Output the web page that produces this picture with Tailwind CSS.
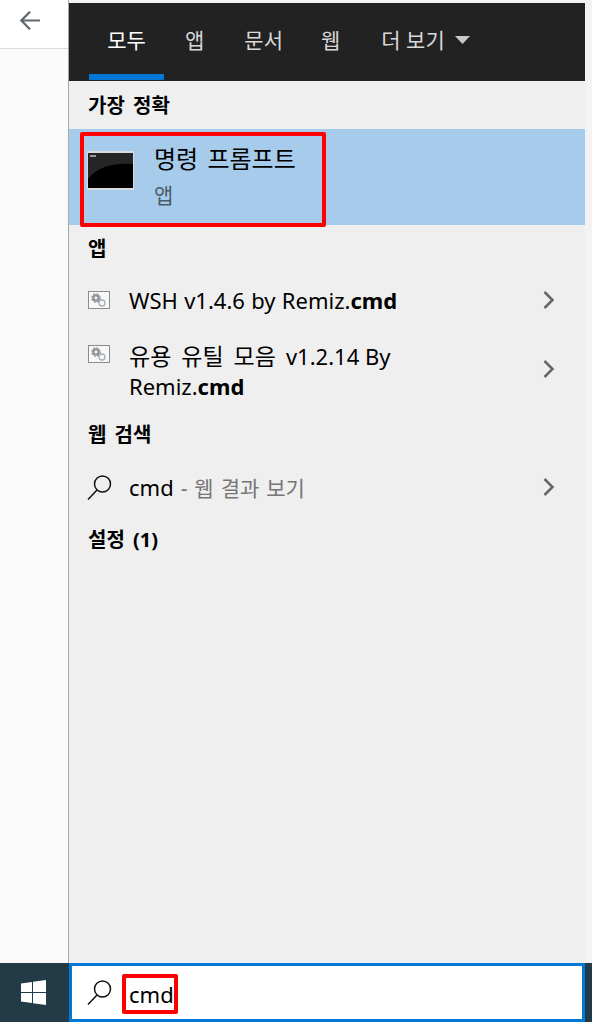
<!DOCTYPE html>
<html lang="ko"><head><meta charset="utf-8">
<script src="https://cdn.jsdelivr.net/npm/@tailwindcss/browser@4"></script></head>
<body class="m-0 overflow-hidden bg-white">
<div class="w-[592px] h-[1022px] flex flex-col font-['Noto_Sans','Noto_Sans_CJK_KR',sans-serif] text-black">
  <div class="h-[963px] flex">
    <div class="w-[68px] bg-[#fafafa] flex flex-col shrink-0">
      <div class="h-[49px] bg-white border-b border-[#d9d9de] flex items-start pl-[20px] pt-[11px]">
        <svg class="w-[20px] h-[19px]" viewBox="0 0 20 19" fill="none" stroke="#63676e" stroke-width="2.200"><path d="M20 9.500H2M10 .7 1.400 9.500 10 18.300"/></svg>
      </div>
    </div>
    <div class="w-[517px] shrink-0 bg-[#efefef] border-l border-[#a8a8a8] flex flex-col relative">
      <div class="h-[3px] bg-[#f3f3f3] shrink-0"></div>
      <div class="h-[78px] bg-[#222222] flex items-start pl-[20px] shrink-0 text-[21px] text-[#d8d8d8] leading-[28px]">
        <div class="relative w-[75px] h-[77px] pt-[23px] text-center text-white">모두<div class="absolute left-0 right-0 bottom-0 h-[6px] bg-[#0078d7]"></div></div>
        <div class="ml-[21px] pt-[23px]">앱</div>
        <div class="ml-[40px] pt-[23px]">문서</div>
        <div class="ml-[38px] pt-[23px]">웹</div>
        <div class="ml-[41px] pt-[23px] flex items-center gap-[10px]">더 보기<svg class="w-[15px] h-[8px]" viewBox="0 0 15 8"><path d="M0 0H15L7.500 8Z" fill="#c8c8c8"/></svg></div>
      </div>
      <div class="h-[48px] pl-[19px] pt-[11px] font-bold text-[20px] leading-[28px] [word-spacing:3px] shrink-0">가장 정확</div>
      <div class="h-[96px] bg-[#a7cbea] flex items-start pl-[18px] shrink-0">
        <svg class="w-[47px] h-[39px] mt-[22px] shrink-0" viewBox="0 0 47 39"><rect width="47" height="39" fill="#d6dce2"/><rect x="1" y="2" width="45" height="35" fill="#000"/><path d="M1 2H46V13C28 12 11 15 1 28Z" fill="#262626"/><rect x="3" y="4" width="6" height="2" fill="#999"/></svg>
        <div class="ml-[20px]">
          <div class="text-[24px] leading-[30px] mt-[15px] [word-spacing:3px]">명령 프롬프트</div>
          <div class="text-[21px] leading-[28px] mt-[7px] text-[#4a5b6b]">앱</div>
        </div>
      </div>
      <div class="h-[46px] pl-[19px] pt-[10px] font-bold text-[20px] leading-[28px] shrink-0">앱</div>
      <div class="h-[58px] flex items-center pl-[19px] pr-[30px] text-[22px] leading-[30px] shrink-0">
        <svg class="w-[22px] h-[18px] shrink-0" viewBox="0 0 22 18"><rect x=".5" y=".5" width="21" height="17" fill="#f8f8f8" stroke="#8c8c8c"/><circle cx="8" cy="7" r="2.600" fill="none" stroke="#8f969c" stroke-width="2.400"/><circle cx="8" cy="7" r="4.200" fill="none" stroke="#8f969c" stroke-width="1.200" stroke-dasharray="2 1.300"/><circle cx="14" cy="12" r="3" fill="none" stroke="#a8afb5" stroke-width="1.300"/></svg>
        <div class="ml-[19px] flex-1 [word-spacing:.6px]">WSH v1.4.6 by Remiz.<b>cmd</b></div>
        <svg class="w-[12px] h-[18px] shrink-0" viewBox="0 0 12 18" fill="none" stroke="#666" stroke-width="2.500"><path d="M1.500 1 9.500 9 1.500 17"/></svg>
      </div>
      <div class="h-[80px] flex items-center pl-[19px] pr-[30px] text-[22px] leading-[30px] shrink-0">
        <svg class="w-[22px] h-[18px] shrink-0 self-start mt-[16px]" viewBox="0 0 22 18"><rect x=".5" y=".5" width="21" height="17" fill="#f8f8f8" stroke="#8c8c8c"/><circle cx="8" cy="7" r="2.600" fill="none" stroke="#8f969c" stroke-width="2.400"/><circle cx="8" cy="7" r="4.200" fill="none" stroke="#8f969c" stroke-width="1.200" stroke-dasharray="2 1.300"/><circle cx="14" cy="12" r="3" fill="none" stroke="#a8afb5" stroke-width="1.300"/></svg>
        <div class="ml-[19px] flex-1 mt-[3px]"><span class="text-[23px] [word-spacing:4px]">유용 유틸 모음 </span>v1.2.14 By<br>Remiz.<b>cmd</b></div>
        <svg class="w-[12px] h-[18px] shrink-0" viewBox="0 0 12 18" fill="none" stroke="#666" stroke-width="2.500"><path d="M1.500 1 9.500 9 1.500 17"/></svg>
      </div>
      <div class="h-[49px] pl-[19px] pt-[12px] font-bold text-[20px] leading-[28px] [word-spacing:3px] shrink-0">웹 검색</div>
      <div class="h-[58px] flex items-center pl-[18px] pr-[30px] text-[22px] leading-[30px] shrink-0">
        <svg class="w-[25px] h-[25px] shrink-0" viewBox="0 0 25 25" fill="none" stroke="#111" stroke-width="1.500"><circle cx="15.500" cy="9" r="8"/><path d="M10 15 1 24.500"/></svg>
        <div class="ml-[17px] flex-1">cmd<span class="text-[#767676] text-[21px] [word-spacing:1.500px]"> - 웹 결과 보기</span></div>
        <svg class="w-[12px] h-[18px] shrink-0" viewBox="0 0 12 18" fill="none" stroke="#666" stroke-width="2.500"><path d="M1.500 1 9.500 9 1.500 17"/></svg>
      </div>
      <div class="pl-[19px] pt-[10px] font-bold text-[20px] leading-[28px] [word-spacing:3px]">설정 (1)</div>
      <div class="absolute left-[11px] top-[132px] w-[246px] h-[95px] border-[4px] border-[#ff0000] rounded-[2px]"></div>
    </div>
    <div class="flex-1 bg-[#f3f3f3]"></div>
  </div>
  <div class="h-[59px] bg-[#233a47] flex">
    <div class="w-[69px] flex items-center justify-center shrink-0">
      <svg class="w-[25px] h-[25px] mr-[3px]" viewBox="0 0 25 25" fill="#fff"><path d="M0 3.500 11 2v10H0ZM12 1.800 25 0v12H12ZM0 13h11v10L0 21.500ZM12 13h13v12L12 23.200Z"/></svg>
    </div>
    <div class="w-[516px] bg-white border-[3px] border-[#0078d7] flex items-center relative pl-[15px] shrink-0">
      <svg class="w-[25px] h-[25px] shrink-0" viewBox="0 0 25 25" fill="none" stroke="#111" stroke-width="1.500"><circle cx="15.500" cy="9" r="8"/><path d="M10 15 1 24.500"/></svg>
      <div class="ml-[17px] text-[22px] leading-[26px] mt-[2px] border-r border-[#333]">cmd</div>
      <div class="absolute left-[50px] top-[8px] w-[56px] h-[40px] border-[4px] border-[#ff0000] rounded-[2px]"></div>
    </div>
  </div>
</div>
</body></html>
